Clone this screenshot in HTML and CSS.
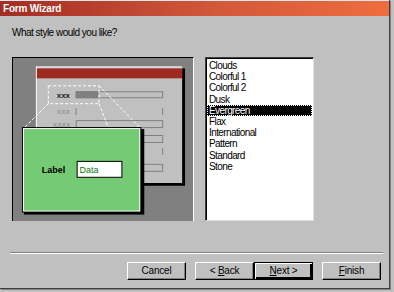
FILE: index.html
```html
<!DOCTYPE html>
<html>
<head>
<meta charset="utf-8">
<link rel="stylesheet" href="styles.css">
</head>
<body>
<div class="window">
  <div class="titlebar">Form Wizard</div>
  <div class="content">
    <div class="question">What style would you like?</div>
    <div class="main">
      <div class="preview">
        <svg width="181" height="163" viewBox="0 0 181 163">
          <rect x="0" y="0" width="181" height="163" fill="#808080"/>
          <rect x="25" y="10" width="148" height="118" fill="#000"/>
          <rect x="23" y="8" width="147" height="117" fill="#fff"/>
          <rect x="24" y="9" width="146" height="116" fill="#c0c0c0"/>
          <rect x="24" y="10" width="146" height="10" fill="#9e2a22"/>
          <g font-family="Liberation Sans, Arial, sans-serif" font-size="8" font-weight="bold">
            <text x="44" y="40" fill="#202020">xxx</text>
            <text x="44" y="56" fill="#9a9a9a">xxx</text>
            <text x="40" y="69" fill="#9a9a9a">xxxx</text>
          </g>
          <rect x="63.5" y="33.5" width="87" height="6" fill="none" stroke="#808080"/>
          <rect x="63" y="33" width="23" height="7" fill="#808080"/>
          <line x1="63.5" y1="50" x2="63.5" y2="57" stroke="#808080"/>
          <line x1="150.5" y1="50" x2="150.5" y2="57" stroke="#808080"/>
          <rect x="63.5" y="62.5" width="87" height="7" fill="none" stroke="#808080"/>
          <rect x="63.5" y="77.5" width="87" height="7" fill="none" stroke="#808080"/>
          <line x1="63.5" y1="90" x2="63.5" y2="97" stroke="#808080"/>
          <line x1="150.5" y1="90" x2="150.5" y2="97" stroke="#808080"/>
          <rect x="63.5" y="106.5" width="87" height="7" fill="none" stroke="#808080"/>
          <rect x="35.5" y="27.5" width="51" height="18" fill="none" stroke="#fff" stroke-dasharray="3 2"/>
          <line x1="35.5" y1="45.5" x2="11" y2="70" stroke="#fff" stroke-dasharray="3 2"/>
          <line x1="86.5" y1="27.5" x2="128" y2="70" stroke="#fff" stroke-dasharray="3 2"/>
          <line x1="86.5" y1="45.5" x2="96" y2="70" stroke="#fff" stroke-dasharray="3 2"/>
          <rect x="11" y="71" width="121" height="86" fill="#000"/>
          <rect x="9" y="69" width="120" height="86" fill="#000"/>
          <rect x="10" y="70" width="118" height="84" fill="#fff"/>
          <rect x="11" y="71" width="116" height="82" fill="#74cb74"/>
          <text x="29" y="115" font-family="Liberation Sans, Arial, sans-serif" font-size="9" font-weight="bold" fill="#000">Label</text>
          <rect x="64.5" y="103.5" width="45" height="16" fill="#fff" stroke="#000"/>
          <text x="67" y="115" font-family="Liberation Sans, Arial, sans-serif" font-size="9" fill="#0a7a0a">Data</text>
        </svg>
      </div>
      <div class="listbox">
        <div class="item">Clouds</div>
        <div class="item">Colorful 1</div>
        <div class="item">Colorful 2</div>
        <div class="item">Dusk</div>
        <div class="item selected">Evergreen</div>
        <div class="item">Flax</div>
        <div class="item">International</div>
        <div class="item">Pattern</div>
        <div class="item">Standard</div>
        <div class="item">Stone</div>
      </div>
    </div>
    <div class="separator"></div>
    <div class="buttons">
      <div class="btn">Cancel</div>
      <div class="group">
        <div class="btn">&lt; <u>B</u>ack</div>
        <div class="btn default"><u>N</u>ext &gt;</div>
      </div>
      <div class="btn"><u>F</u>inish</div>
    </div>
  </div>
</div>
</body>
</html>
```

FILE: styles.css
```css
html, body {
  margin: 0;
  padding: 0;
  background: #c0c0c0;
}
body {
  width: 394px;
  height: 292px;
  overflow: hidden;
  font-family: "Liberation Sans", Arial, sans-serif;
  font-size: 10px;
  color: #000;
}
.window {
  width: 390px;
  height: 289px;
  box-sizing: border-box;
  border-right: 1px solid #404040;
  border-bottom: 1px solid #404040;
  background: #c0c0c0;
  display: flex;
  flex-direction: column;
  box-shadow: 1px 1px 0 #808080;
}
.titlebar {
  height: 16px;
  background: linear-gradient(to right, #a22c24, #d2583a 55%, #ef6c3e);
  color: #fff;
  font-weight: bold;
  font-size: 10px;
  letter-spacing: -0.2px;
  line-height: 16px;
  padding-left: 3px;
  border-top: 1px solid #e8e8e8;
  box-sizing: border-box;
}
.content {
  padding: 0 7px 0 10px;
  display: flex;
  flex-direction: column;
}
.question {
  margin-top: 10px;
  height: 13px;
  line-height: 13px;
  padding-left: 2px;
  font-size: 10px;
  letter-spacing: -0.5px;
}
.main {
  display: flex;
  margin-top: 18px;
  gap: 11px;
  padding-left: 2px;
}
.preview {
  width: 182px;
  height: 164px;
  box-sizing: border-box;
  border-top: 1px solid #000;
  border-left: 1px solid #000;
  border-right: 1px solid #ffffff;
  background: #808080;
  display: flex;
}
.preview svg {
  display: block;
}
.listbox {
  width: 109px;
  height: 164px;
  box-sizing: border-box;
  background: #fff;
  border-top: 1px solid #404040;
  border-left: 1px solid #404040;
  border-right: 1px solid #e0e0e0;
  border-bottom: 1px solid #e0e0e0;
  box-shadow: inset 1px 1px 0 #000;
  padding: 2px 1px 0 1px;
  display: flex;
  flex-direction: column;
}
.item {
  height: 11.2px;
  line-height: 11px;
  padding-left: 2px;
  font-size: 10px;
  letter-spacing: -0.6px;
}
.item.selected {
  background: #000;
  color: #fff;
  outline: 1px dotted #fff;
  outline-offset: -1px;
}
.separator {
  margin-top: 31px;
  width: 373px;
  height: 1px;
  background: #808080;
  border-bottom: 1px solid #fff;
}
.buttons {
  display: flex;
  justify-content: flex-end;
  gap: 9px;
  margin-top: 8px;
  width: 371px;
}
.group {
  display: flex;
}
.btn {
  width: 59px;
  height: 18px;
  box-sizing: border-box;
  background: #c0c0c0;
  border-top: 1px solid #fff;
  border-left: 1px solid #fff;
  border-right: 1px solid #000;
  border-bottom: 1px solid #000;
  box-shadow: inset -1px -1px 0 #808080;
  text-align: center;
  line-height: 16px;
  font-size: 10px;
  letter-spacing: -0.2px;
}
.btn.default {
  border: 1px solid #000;
  box-shadow: inset 1px 1px 0 #fff, inset -2px -2px 0 #000, inset -1px -1px 0 #808080;
}
```
